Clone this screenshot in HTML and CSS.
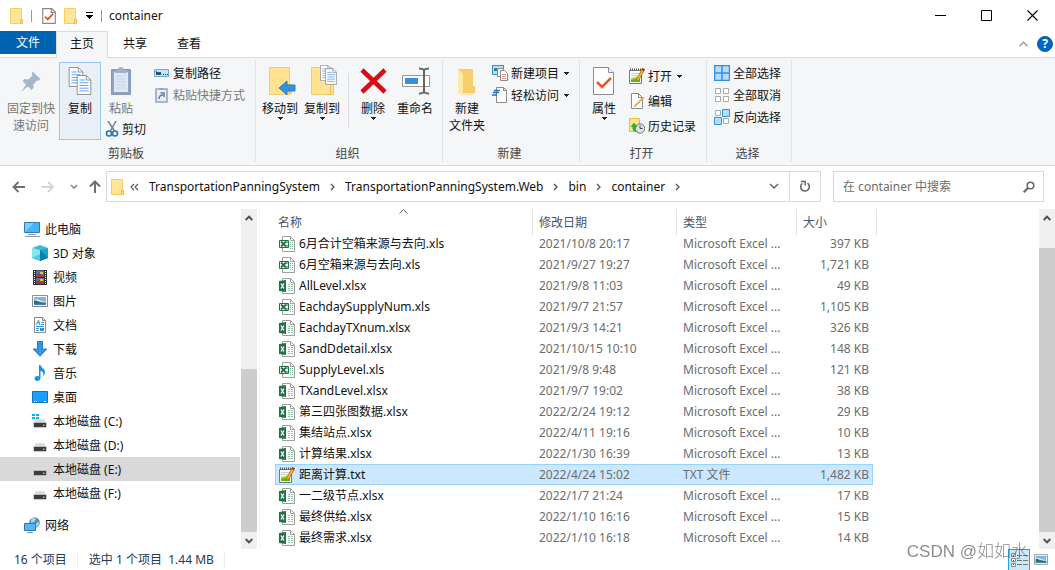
FILE: index.html
```
<!DOCTYPE html>
<html lang="zh-CN">
<head>
    <meta charset="UTF-8">
    <meta name="viewport" content="width=device-width, initial-scale=1.0">
    <title>container</title>
    <link rel="stylesheet" href="styles.css">
</head>
<body>
    <!-- Shared icons -->
    <svg class="symbols" aria-hidden="true">
        <symbol id="folder" viewBox="0 0 16 16">
            <path d="M1.5.5h11v11h1v4h-12z" fill="#ffe69a" stroke="#f3cf62"/>
            <path d="M11.5 11.5h2v4h-2z" fill="#ffe08a" stroke="#eebf4a"/>
        </symbol>
        <symbol id="caret" viewBox="0 0 5 3">
            <path d="M0 0h5v1H0zM1 1h3v1H1zM2 2h1v1H2z" fill="#222"/>
        </symbol>
        <symbol id="chevron" viewBox="0 0 5 8">
            <path d="M1 1l3 3-3 3" fill="none" stroke="#555" stroke-width="1.3"/>
        </symbol>
        <symbol id="up" viewBox="0 0 8 6">
            <path d="M.7 5L4 1.6 7.3 5" fill="none" stroke="#505050" stroke-width="2"/>
        </symbol>
        <symbol id="down" viewBox="0 0 8 6">
            <path d="M.7 1L4 4.4 7.3 1" fill="none" stroke="#505050" stroke-width="2"/>
        </symbol>
        <symbol id="xls" viewBox="0 0 16 16">
            <path d="M3.500.5h8l4 4v11h-12z" fill="#fff" stroke="#a0a0a0"/>
            <path d="M11.500.5v4h4" fill="none" stroke="#a0a0a0"/>
            <path d="M11 6.500h1m1 0h1M11 8.500h1m1 0h1M11 10.500h1m1 0h1M11 12.500h1m1 0h1" stroke="#6fb38d"/>
            <path d="M.5 4.500h9v7h-9z" fill="#fff" stroke="#217346"/>
            <path d="M2 5.500l5 5M7 5.500l-5 5" stroke="#217346" stroke-width="1.800"/>
            <path d="M7 6h2M7 10h2" stroke="#217346"/>
        </symbol>
        <symbol id="xlsx" viewBox="0 0 16 16">
            <path d="M3.500.5h8l4 4v11h-12z" fill="#fff" stroke="#a0a0a0"/>
            <path d="M11.500.5v4h4" fill="none" stroke="#a0a0a0"/>
            <path d="M9 6.500h2m1 0h2M9 8.500h2m1 0h2M9 10.500h2m1 0h2M9 12.500h2m1 0h2" stroke="#8cc4a4"/>
            <path d="M0 3l7-1v12l-7-1z" fill="#217346"/>
            <path d="M2 5.500l3 5M5 5.500l-3 5" stroke="#fff" stroke-width="1.300"/>
        </symbol>
        <symbol id="notepad" viewBox="0 0 16 16">
            <path d="M.5 2.500h12v13H.5z" fill="#fff" stroke="#777"/>
            <path d="M2 5.500h9M2 7.500h9" stroke="#ccc"/>
            <path d="M2 10l9-2v6H2z" fill="#a5d916"/>
            <path d="M2 12l9-2v4H2z" fill="#5fb80b"/>
            <path d="M1 1.500h12" stroke="#555" stroke-width="2" stroke-dasharray="1 1"/>
            <path d="M14 2L8.500 12" stroke="#8a5a10" stroke-width="3"/>
            <path d="M14 2L8.500 12" stroke="#f8b830" stroke-width="1.800"/>
            <path d="M14.700.5l-1 2" stroke="#b4231a" stroke-width="3"/>
        </symbol>
        <symbol id="picture" viewBox="0 0 16 12">
            <path d="M.5.5h15v11H.5z" fill="#fff" stroke="#8c8c8c"/>
            <path d="M2 2h12v8H2z" fill="#7eb6e8"/>
            <path d="M2 5.500c2-2 4-1 6 0s4 1 6 1V8H2z" fill="#e4f2fa"/>
            <path d="M2 5.500c3-.5 5 2 12 2V10H2z" fill="#2e6b63"/>
            <path d="M2 8.500h12V10H2z" fill="#3b85ba"/>
        </symbol>
        <symbol id="drive" viewBox="0 0 16 16">
            <path d="M4 6h8l2 4H2z" fill="#d9dbde"/>
            <path d="M1.500 9.500h13v5h-13z" fill="#9a9a9a"/>
            <path d="M2 10h12v4H2z" fill="#3c3c3c"/>
            <path d="M11 11.500h1.500V13H11z" fill="#67e36b"/>
        </symbol>
        <symbol id="page-check" viewBox="0 0 24 32">
            <path d="M1.500 2.500h15l5 5v22h-20z" fill="#fff" stroke="#8c8c8c"/>
            <path d="M16.500 2.500v5h5" fill="#f4f4f4" stroke="#8c8c8c"/>
            <path d="M5 17l5 5 9-9" fill="none" stroke="#f0561d" stroke-width="2.500"/>
        </symbol>
        <symbol id="sheet" viewBox="0 0 16 22">
            <path d="M.5.5h10l5 5v16H.5z" fill="#fff" stroke="#888"/>
            <path d="M10.500.5v5h5" fill="none" stroke="#888"/>
            <path d="M3 5.500h6M3 8.500h10M3 11.500h10M3 14.500h10M3 17.500h10" stroke="#4f9cec"/>
        </symbol>
    </svg>

    <header class="titlebar">
        <svg class="icon"><use href="#folder"/></svg>
        <span class="bar"></span>
        <button class="quick" aria-label="属性"><svg width="14" height="16" viewBox="0 0 24 28"><path d="M1 1h16l6 6v20H1z" fill="#fff" stroke="#888" stroke-width="2"/><path d="M16 1v7h7" fill="none" stroke="#888" stroke-width="2"/><path d="M5 15l5 5 9-10" fill="none" stroke="#e2501c" stroke-width="3"/></svg></button>
        <button class="quick" aria-label="新建文件夹"><svg class="icon"><use href="#folder"/></svg></button>
        <button class="quick" aria-label="自定义快速访问工具栏"><svg width="7" height="7" viewBox="0 0 7 7"><path d="M0 .5h7M0 3.500h7M1 4.500h5M2 5.500h3M3 6.500h1" stroke="#000"/></svg></button>
        <span class="bar"></span>
        <h1>container</h1>
        <div class="window-buttons">
            <button aria-label="最小化"><svg width="11" height="11"><path d="M0 5.500h11" stroke="#000"/></svg></button>
            <button aria-label="最大化"><svg width="11" height="11"><path d="M1 .5h9.500v10H.5V.5z" fill="none" stroke="#000"/></svg></button>
            <button aria-label="关闭"><svg width="11" height="11"><path d="M.5.5l10 10M10.500.5l-10 10" stroke="#000" stroke-width="1.100"/></svg></button>
        </div>
    </header>

    <nav class="tabs">
        <button class="tab file">文件</button>
        <button class="tab active">主页</button>
        <button class="tab">共享</button>
        <button class="tab">查看</button>
        <div class="tab-tools">
            <button aria-label="折叠功能区"><svg width="9" height="6" viewBox="0 0 9 6"><path d="M.5 5.200l4-4 4 4" fill="none" stroke="#9a9a9a" stroke-width="1.300"/></svg></button>
            <button class="help" aria-label="帮助">?</button>
        </div>
    </nav>

    <section class="ribbon">
        <div class="group clipboard">
            <div class="tools">
                <button class="big wide disabled">
                    <svg width="32" height="32"><g fill="#a9b6c9"><path d="M17.500 6.500l8 7.500-1.800 1.800-1.400-.6-4 4.200.4 3.400-2.200 2.200-9-9 2.200-2 3.600.4 4.200-4-.8-1.500z"/><path d="M12 18.500l2 2L6 27z"/></g></svg>
                    固定到快<br>速访问
                </button>
                <button class="big selected">
                    <svg width="32" height="32"><use href="#sheet" x="4" y="2" width="16" height="20"/><use href="#sheet" x="12" y="10" width="16" height="20"/></svg>
                    复制
                </button>
                <div class="column paste">
                    <button class="big disabled">
                        <svg width="32" height="32"><path d="M6.500 4.500h19v25h-19z" fill="#8fa3c0" stroke="#8698b5"/><path d="M9 7h14v20H9z" fill="#dfe7f3"/><path d="M10 8V5h3c0-4 6-4 6 0h3v3z" fill="#a3b1c8"/><path d="M11 11h10M11 14h10M11 17h10M11 20h10M11 23h10" stroke="#c6d3e6"/></svg>
                        粘贴
                    </button>
                    <button class="small">
                        <svg class="icon" viewBox="0 0 16 16"><path d="M3 0l6.500 10M11 0L5.500 10" stroke="#71808c" stroke-width="1.500"/><circle cx="4" cy="12.500" r="2.500" fill="none" stroke="#2878b8" stroke-width="1.600"/><circle cx="10" cy="12.500" r="2.500" fill="none" stroke="#2878b8" stroke-width="1.600"/></svg>
                        剪切
                    </button>
                </div>
                <div class="column paths">
                    <button class="small">
                        <svg class="icon" viewBox="0 0 16 16"><path d="M.5 4.500h14v7H.5z" fill="#c3e4fb" stroke="#6ba9d6"/><path d="M2 6l1 4 1-3 1 3 1-3 1 3M9 9.500h1m1 0h1m1 0h1" fill="none" stroke="#173c5c"/></svg>
                        复制路径
                    </button>
                    <button class="small disabled">
                        <svg class="icon" viewBox="0 0 16 16"><path d="M2 2h11v13H2z" fill="#e9eef6" stroke="#98a7be" stroke-width="1.600"/><path d="M5 3V1h5v2z" fill="#98a7be"/><path d="M5 12c0-3 1-4 4-4m-2.500-2H10v4" fill="none" stroke="#6b7f9c" stroke-width="1.600"/></svg>
                        粘贴快捷方式
                    </button>
                </div>
            </div>
            <div class="group-name">剪贴板</div>
        </div>

        <div class="group organize">
            <div class="tools">
                <button class="big">
                    <svg width="32" height="32"><path d="M5.500 2.500h20v27h-20z" fill="#ffe38f" stroke="#f0cf6b"/><path d="M24 19h4v10h-4z" fill="#f3ce68"/><path d="M15 23l8-7v4h8v6h-8v4z" fill="#3491e2" stroke="#2a7cc9"/></svg>
                    移动到
                    <svg class="caret"><use href="#caret"/></svg>
                </button>
                <button class="big">
                    <svg width="32" height="32"><path d="M5.500 2.500h20v27h-20z" fill="#ffe38f" stroke="#f0cf6b"/><path d="M24.500 19.500h3v10h-3z" fill="#fae08f" stroke="#eec65d"/><use href="#sheet" x="14" y="0" width="12" height="16"/><use href="#sheet" x="19" y="3" width="12" height="17"/></svg>
                    复制到
                    <svg class="caret"><use href="#caret"/></svg>
                </button>
                <span class="divider"></span>
                <button class="big">
                    <svg width="32" height="32"><path d="M5 5l23 22M28 5L5 27" stroke="#d90b14" stroke-width="4.500"/></svg>
                    删除
                    <svg class="caret"><use href="#caret"/></svg>
                </button>
                <button class="big">
                    <svg width="32" height="32"><path d="M3.500 10.500h27v11h-27z" fill="#fff" stroke="#999"/><path d="M6 13h13v6H6z" fill="#3491e2"/><path d="M20 3.500c3 0 4.500.5 5 2 .5-1.500 2-2 5-2M25 4v24M20 28.500c3 0 4.500-.5 5-2 .5 1.500 2 2 5 2" fill="none" stroke="#666" stroke-width="2"/></svg>
                    重命名
                </button>
            </div>
            <div class="group-name">组织</div>
        </div>

        <div class="group create">
            <div class="tools">
                <button class="big">
                    <svg width="32" height="32"><path d="M7 4h15v17h2v7H7z" fill="#f6cf6c"/><path d="M7 4l5 5v22l-5-4z" fill="#ffe9a8"/><path d="M12 28h13l-4 2h-9z" fill="#fbe8b4"/></svg>
                    新建<br>文件夹
                </button>
                <div class="column">
                    <button class="small">
                        <svg class="icon" viewBox="0 0 16 16"><path d="M.5.5h11v9H.5z" fill="#b9e0f4" stroke="#4689b0"/><path d="M2 3h3v3H2z" fill="#2c7db0"/><path d="M5.500 3.500h6v8h-6z" fill="#fff" stroke="#8a8a8a"/><path d="M8.500 5.500h4l3 3v7h-7z" fill="#fff" stroke="#8a8a8a"/><path d="M10 9.500h4M10 11.500h4M10 13.500h4" stroke="#d99"/></svg>
                        新建项目
                        <svg class="caret"><use href="#caret"/></svg>
                    </button>
                    <button class="small">
                        <svg class="icon" viewBox="0 0 16 16"><path d="M4.500.5h7l3 3v12h-10z" fill="#fff" stroke="#8a8a8a"/><path d="M11.500.5v3h3" fill="none" stroke="#8a8a8a"/><path d="M2 3.500h6M1 5.500h6M0 8h5" stroke="#2472b3" stroke-width="1.300"/></svg>
                        轻松访问
                        <svg class="caret"><use href="#caret"/></svg>
                    </button>
                </div>
            </div>
            <div class="group-name">新建</div>
        </div>

        <div class="group open">
            <div class="tools">
                <button class="big">
                    <svg width="24" height="32"><use href="#page-check"/></svg>
                    属性
                    <svg class="caret"><use href="#caret"/></svg>
                </button>
                <div class="column roomy">
                    <button class="small">
                        <svg class="icon"><use href="#notepad"/></svg>
                        打开
                        <svg class="caret"><use href="#caret"/></svg>
                    </button>
                    <button class="small">
                        <svg class="icon" viewBox="0 0 16 16"><path d="M2.500.5h7l4 4v11h-11z" fill="#fff" stroke="#8a8a8a"/><path d="M9.500.5v4h4" fill="none" stroke="#8a8a8a"/><path d="M15 5l-8 8-2 1 1-2 8-8z" fill="#f6bb42" stroke="#d8972a" stroke-width=".6"/></svg>
                        编辑
                    </button>
                    <button class="small">
                        <svg class="icon" viewBox="0 0 16 16"><path d="M.5.5h10v13H.5z" fill="#ffe38f" stroke="#e8bf4c"/><circle cx="11" cy="10.500" r="4.700" fill="#dfe3e6" stroke="#6f777d"/><path d="M11 7.500v3h2.500" fill="none" stroke="#444"/><path d="M9 14c-4 0-6-2-5.500-5H1.500L5 4.500 8.500 9H6.500c0 2 .5 4 2.500 5z" fill="#2fae3c"/></svg>
                        历史记录
                    </button>
                </div>
            </div>
            <div class="group-name">打开</div>
        </div>

        <div class="group select">
            <div class="tools">
                <div class="column">
                    <button class="small">
                        <svg class="icon" viewBox="0 0 16 16"><path d="M.5.5h15v15H.5zM8 0v16M0 8h16" fill="#b5dcfa" stroke="#2f93e4" stroke-width="1.500"/></svg>
                        全部选择
                    </button>
                    <button class="small">
                        <svg class="icon" viewBox="0 0 16 16"><path d="M1.500 1.500h5v5h-5zM9.500 1.500h5v5h-5zM1.500 9.500h5v5h-5zM9.500 9.500h5v5h-5z" fill="#fff" stroke="#aaa"/></svg>
                        全部取消
                    </button>
                    <button class="small">
                        <svg class="icon" viewBox="0 0 16 16"><path d="M1.500 1.500h5v5h-5zM9.500 9.500h5v5h-5z" fill="#fff" stroke="#aaa"/><path d="M8.500.5h7v7h-7zM.5 8.500h7v7h-7z" fill="#b5dcfa" stroke="#2f93e4"/></svg>
                        反向选择
                    </button>
                </div>
            </div>
            <div class="group-name">选择</div>
        </div>
    </section>

    <section class="navigation">
        <div class="history">
            <button aria-label="后退"><svg width="14" height="12"><path d="M6.500 1l-5 5 5 5M1.500 6H13" fill="none" stroke="#6e6e6e" stroke-width="1.800"/></svg></button>
            <button aria-label="前进"><svg width="14" height="12"><path d="M7 1l5 5-5 5M12 6H.5" fill="none" stroke="#d4d4d4" stroke-width="1.800"/></svg></button>
            <button aria-label="最近浏览的位置"><svg width="8" height="6" viewBox="0 0 8 6"><path d="M1 1l3 3 3-3" fill="none" stroke="#888" stroke-width="1.600"/></svg></button>
            <button aria-label="上移"><svg width="14" height="13"><path d="M2 6.500l5-5 5 5M7 1.500V13" fill="none" stroke="#6e6e6e" stroke-width="2"/></svg></button>
        </div>
        <div class="address">
            <svg class="icon"><use href="#folder"/></svg>
            <svg width="9" height="8" viewBox="0 0 9 8"><path d="M4 1L1 4l3 3M8 1L5 4l3 3" fill="none" stroke="#555" stroke-width="1.100"/></svg>
            <a href="#">TransportationPanningSystem</a>
            <svg width="5" height="8"><use href="#chevron"/></svg>
            <a href="#">TransportationPanningSystem.Web</a>
            <svg width="5" height="8"><use href="#chevron"/></svg>
            <a href="#">bin</a>
            <svg width="5" height="8"><use href="#chevron"/></svg>
            <a href="#">container</a>
            <svg width="5" height="8"><use href="#chevron"/></svg>
            <button class="history-list" aria-label="以前的位置"><svg width="10" height="7"><path d="M1 1l4 4 4-4" fill="none" stroke="#666" stroke-width="1.500"/></svg></button>
            <button class="refresh" aria-label="刷新"><svg width="12" height="13" viewBox="0 0 12 13"><path d="M8.500 3.200a4.300 4.300 0 1 1-5.200.2" fill="none" stroke="#666" stroke-width="1.600"/><path d="M2 1.500h4.200v4" fill="none" stroke="#666" stroke-width="1.500"/></svg></button>
        </div>
        <form class="search">
            <input type="text" aria-label="搜索" placeholder="在 container 中搜索">
            <button type="button" aria-label="开始搜索"><svg width="12" height="12"><circle cx="7.500" cy="4.500" r="3.300" fill="none" stroke="#666" stroke-width="1.500"/><path d="M5 7l-4.300 4.300" stroke="#666" stroke-width="2"/></svg></button>
        </form>
    </section>

    <main>
        <nav class="sidebar">
            <a class="root" href="#"><svg class="icon" viewBox="0 0 16 16"><path d="M.5 1.500h15v10H.5z" fill="#41b4fc" stroke="#3579a8"/><path d="M1 11V2h9z" fill="#7accff"/><path d="M4 13.500h8M1 15.500h15" stroke="#8a9cab"/></svg>此电脑</a>
            <a href="#"><svg class="icon" viewBox="0 0 16 16"><path d="M0 3l8-3 8 3-8 3z" fill="#43bccb"/><path d="M0 3l8 2v11l-8-3z" fill="#8ce3e8"/><path d="M16 3L8 5v11l8-3z" fill="#12a5ce"/><path d="M8 5l8 8-8 3z" fill="#087fae"/><path d="M0 13l8-4v7z" fill="#4dccd9"/></svg>3D 对象</a>
            <a href="#"><svg class="icon" viewBox="0 0 16 16"><path d="M1 1h14v15H1z" fill="#303030"/><path d="M4 1.500h8v6H4zM4 9h8v6H4z" fill="#4775ca"/><path d="M4 6l3-2 5 3v1H4zM4 13l3-2 5 2v2H4z" fill="#a33b2b"/><path d="M8 3h3v2H8zM8 10h3v2H8z" fill="#ecbd3d"/><path d="M2.500 2v14M13.500 2v14" stroke="#fff" stroke-dasharray="1 1"/></svg>视频</a>
            <a href="#"><svg width="16" height="12"><use href="#picture"/></svg>图片</a>
            <a href="#"><svg class="icon" viewBox="0 0 16 16"><path d="M2.500.5h8l3 3v12h-11z" fill="#fff" stroke="#8a8a8a"/><path d="M10.500.5v3h3" fill="none" stroke="#8a8a8a"/><path d="M4 8l2.500-5L8 8M5 6h3M9 5.500h3M9 7.500h3M4 9.500h8M4 11.500h3M4 13.500h3" fill="none" stroke="#3299dd"/><path d="M8 11h4v3H8z" fill="#438fae"/></svg>文档</a>
            <a href="#"><svg class="icon" viewBox="0 0 16 16"><path d="M5.500.5h5V8h4.300L8 15.300 1.200 8h4.300z" fill="#3a94e4" stroke="#2b7ac2"/></svg>下载</a>
            <a href="#"><svg class="icon" viewBox="0 0 16 16"><path d="M7 0h1.500c.5 3 4.500 3.500 4.500 7 0 2-1 3.500-2 4 1-3 0-4.500-2.500-5V13c0 3.500-6 4-6 .5 0-2 2.500-3 4.500-2z" fill="#1c93e3"/></svg>音乐</a>
            <a href="#"><svg class="icon" viewBox="0 0 16 16"><path d="M.5 2.500h15v11H.5z" fill="#1aa0ff" stroke="#1671b4"/><path d="M2 12.500h1m1 0h1m7 0h2" stroke="#fff"/></svg>桌面</a>
            <a href="#"><svg class="icon" viewBox="0 0 16 16"><use href="#drive"/><path d="M0 1h3v2H0zM4 1h3v2H4zM0 4h3v2H0zM4 4h3v2H4z" fill="#0bb2f2"/></svg>本地磁盘 (C:)</a>
            <a href="#"><svg class="icon"><use href="#drive"/></svg>本地磁盘 (D:)</a>
            <a class="current" href="#"><svg class="icon"><use href="#drive"/></svg>本地磁盘 (E:)</a>
            <a href="#"><svg class="icon"><use href="#drive"/></svg>本地磁盘 (F:)</a>
            <a class="root network" href="#"><svg class="icon" viewBox="0 0 16 16"><circle cx="10.500" cy="5.500" r="5.300" fill="#4f93b8"/><path d="M7 2c2-2 4-1 5 0l-2 3-3 1zM12 6l3-1c0 3-1 4-3 5z" fill="#a9d4e5"/><path d="M.5 6.500h11v7H.5z" fill="#51b9fa" stroke="#2e74a8"/><path d="M3 15.500h6" stroke="#6d98b5"/></svg>网络</a>
        </nav>
        <div class="scrollbar">
            <button aria-label="向上滚动"><svg width="8" height="6"><use href="#up"/></svg></button>
            <div class="track side-track"><div class="thumb"></div></div>
            <button aria-label="向下滚动"><svg width="8" height="6"><use href="#down"/></svg></button>
        </div>

        <section class="files">
            <table>
                <colgroup>
                    <col>
                    <col class="col-date">
                    <col class="col-type">
                    <col class="col-size">
                </colgroup>
                <thead>
                    <tr>
                        <th>名称<svg class="sort" width="9" height="5" viewBox="0 0 9 5"><path d="M.5 4.500l4-4 4 4" fill="none" stroke="#666"/></svg></th>
                        <th>修改日期</th>
                        <th>类型</th>
                        <th>大小</th>
                    </tr>
                </thead>
                <tbody>
                    <tr><td><svg class="icon"><use href="#xls"/></svg>6月合计空箱来源与去向.xls</td><td>2021/10/8 20:17</td><td>Microsoft Excel ...</td><td>397 KB</td></tr>
                    <tr><td><svg class="icon"><use href="#xls"/></svg>6月空箱来源与去向.xls</td><td>2021/9/27 19:27</td><td>Microsoft Excel ...</td><td>1,721 KB</td></tr>
                    <tr><td><svg class="icon"><use href="#xlsx"/></svg>AllLevel.xlsx</td><td>2021/9/8 11:03</td><td>Microsoft Excel ...</td><td>49 KB</td></tr>
                    <tr><td><svg class="icon"><use href="#xls"/></svg>EachdaySupplyNum.xls</td><td>2021/9/7 21:57</td><td>Microsoft Excel ...</td><td>1,105 KB</td></tr>
                    <tr><td><svg class="icon"><use href="#xlsx"/></svg>EachdayTXnum.xlsx</td><td>2021/9/3 14:21</td><td>Microsoft Excel ...</td><td>326 KB</td></tr>
                    <tr><td><svg class="icon"><use href="#xlsx"/></svg>SandDdetail.xlsx</td><td>2021/10/15 10:10</td><td>Microsoft Excel ...</td><td>148 KB</td></tr>
                    <tr><td><svg class="icon"><use href="#xls"/></svg>SupplyLevel.xls</td><td>2021/9/8 9:48</td><td>Microsoft Excel ...</td><td>121 KB</td></tr>
                    <tr><td><svg class="icon"><use href="#xlsx"/></svg>TXandLevel.xlsx</td><td>2021/9/7 19:02</td><td>Microsoft Excel ...</td><td>38 KB</td></tr>
                    <tr><td><svg class="icon"><use href="#xlsx"/></svg>第三四张图数据.xlsx</td><td>2022/2/24 19:12</td><td>Microsoft Excel ...</td><td>29 KB</td></tr>
                    <tr><td><svg class="icon"><use href="#xlsx"/></svg>集结站点.xlsx</td><td>2022/4/11 19:16</td><td>Microsoft Excel ...</td><td>10 KB</td></tr>
                    <tr><td><svg class="icon"><use href="#xlsx"/></svg>计算结果.xlsx</td><td>2022/1/30 16:39</td><td>Microsoft Excel ...</td><td>13 KB</td></tr>
                    <tr class="selected"><td><svg class="icon"><use href="#notepad"/></svg>距离计算.txt</td><td>2022/4/24 15:02</td><td>TXT 文件</td><td>1,482 KB</td></tr>
                    <tr><td><svg class="icon"><use href="#xlsx"/></svg>一二级节点.xlsx</td><td>2022/1/7 21:24</td><td>Microsoft Excel ...</td><td>17 KB</td></tr>
                    <tr><td><svg class="icon"><use href="#xlsx"/></svg>最终供给.xlsx</td><td>2022/1/10 16:16</td><td>Microsoft Excel ...</td><td>15 KB</td></tr>
                    <tr><td><svg class="icon"><use href="#xlsx"/></svg>最终需求.xlsx</td><td>2022/1/10 16:18</td><td>Microsoft Excel ...</td><td>14 KB</td></tr>
                </tbody>
            </table>
        </section>
        <div class="scrollbar">
            <button aria-label="向上滚动"><svg width="8" height="6"><use href="#up"/></svg></button>
            <div class="track file-track"><div class="thumb"></div></div>
            <button aria-label="向下滚动"><svg width="8" height="6"><use href="#down"/></svg></button>
        </div>
    </main>

    <footer class="status">
        <span>16 个项目</span>
        <span>选中 1 个项目&nbsp; 1.44 MB</span>
        <div class="views">
            <button class="on" aria-label="详细信息"><svg width="17" height="16"><path d="M.5 1.500h4v3h-4zM.5 6.500h4v3h-4zM.5 11.500h4v3h-4z" fill="#fff" stroke="#888"/><path d="M6 3.500h5m1 0h5M6 8.500h5m1 0h5M6 12.500h5m1 0h5" stroke="#777"/><path d="M2 3h1v1H2zM2 8h1v1H2z" fill="#2472c8"/><path d="M2 12h1v1H2z" fill="#d22"/></svg></button>
            <button aria-label="大缩略图"><svg width="14" height="11"><use href="#picture"/></svg></button>
        </div>
    </footer>
    <div class="watermark">CSDN @如如水</div>
</body>
</html>
```
FILE: styles.css
```
/* Global Styles */
* {
    box-sizing: border-box;
}

body {
    display: flex;
    flex-direction: column;
    height: 100vh;
    margin: 0;
    overflow: hidden;
    background: #fff;
    color: #111;
    font-family: "Noto Sans", "Noto Sans CJK SC", sans-serif;
    font-size: 12px;
    line-height: 17px;
}

button,
input {
    margin: 0;
    padding: 0;
    border: none;
    background: none;
    color: inherit;
    font: inherit;
}

a {
    color: inherit;
    text-decoration: none;
}

svg {
    flex: none;
}

.symbols {
    position: absolute;
    width: 0;
    height: 0;
}

.icon {
    width: 16px;
    height: 16px;
}

.caret {
    width: 5px;
    height: 3px;
}

/* Title bar */
.titlebar {
    display: flex;
    flex: none;
    align-items: center;
    height: 31px;
    padding-left: 9px;
}

.titlebar h1 {
    margin: 0 0 0 7px;
    font-size: 12px;
    font-weight: normal;
}

.bar {
    width: 1px;
    height: 12px;
    margin-left: 6px;
    background: #999;
}

.quick {
    display: flex;
    margin-left: 10px;
}

.quick + .quick {
    margin-left: 7px;
}

.titlebar .quick + .bar {
    margin-left: 8px;
}

.window-buttons {
    display: flex;
    margin-left: auto;
}

.window-buttons button {
    display: flex;
    align-items: center;
    justify-content: center;
    width: 46px;
    height: 30px;
}

/* Tabs */
.tabs {
    display: flex;
    flex: none;
    height: 27px;
    border-bottom: 1px solid #dadbdc;
}

.tab {
    width: 54px;
    height: 24px;
}

.tab.file {
    width: 56px;
    height: 23px;
    background: #0063b1;
    color: #fff;
}

.tab.active {
    width: 52px;
    height: 27px;
    padding-bottom: 3px;
    border: 1px solid #dadbdc;
    border-bottom: none;
    background: #f5f6f7;
}

.tab-tools {
    display: flex;
    align-items: center;
    gap: 9px;
    margin-left: auto;
    padding-right: 2px;
}

.tab-tools button {
    display: flex;
}

.tab-tools .help {
    justify-content: center;
    width: 16px;
    height: 16px;
    border: 1px solid #155a9c;
    border-radius: 50%;
    background: #0067c5;
    color: #fff;
    font-weight: bold;
    line-height: 14px;
}

/* Ribbon */
.ribbon {
    display: flex;
    flex: none;
    height: 108px;
    padding: 2px 0 3px;
    border-bottom: 1px solid #dadbdc;
    background: #f5f6f7;
}

.group {
    display: flex;
    flex-direction: column;
    justify-content: space-between;
    padding: 2px 0 0 3px;
    border-right: 1px solid #e2e3e4;
}

.clipboard {
    width: 256px;
}

.organize {
    width: 187px;
}

.create {
    width: 137px;
}

.open {
    width: 127px;
}

.select {
    width: 85px;
}

.tools {
    display: flex;
}

.group-name {
    padding-right: 6px;
    color: #444;
    text-align: center;
}

.column {
    display: flex;
    flex-direction: column;
    align-items: flex-start;
}

.column.paste {
    justify-content: space-between;
    width: 47px;
    padding-left: 1px;
}

.column.paths {
    padding-left: 2px;
}

.roomy {
    gap: 3px;
    padding-top: 3px;
}

.big {
    display: flex;
    flex-direction: column;
    align-items: center;
    width: 42px;
    height: 78px;
    padding-top: 2px;
    border: 1px solid transparent;
}

.big > svg:first-child {
    margin-bottom: 3px;
}

.big.wide {
    width: 56px;
}

.big.selected {
    border-color: #99c9ef;
    background: #e8eff7;
}

.paste .big {
    width: 38px;
    height: 56px;
}

.disabled {
    color: #777;
}

.small {
    display: flex;
    align-items: center;
    gap: 3px;
    height: 22px;
    padding-left: 4px;
}

.paste .small {
    margin-left: 3px;
    padding-left: 0;
    gap: 1px;
}

.small .caret {
    margin-left: 2px;
}

.divider {
    width: 1px;
    height: 55px;
    margin: 11px 3px 0 5px;
    background: #dadbdc;
}

/* Address and search */
.navigation {
    display: flex;
    flex: none;
    padding: 5px 11px 7px 12px;
}

.history {
    display: flex;
    align-items: center;
    width: 94px;
    gap: 15px;
}

.history button {
    display: flex;
}

.history button:last-child {
    margin-left: -5px;
}

.address {
    display: flex;
    flex: 1;
    align-items: center;
    gap: 10px;
    height: 31px;
    padding-left: 3px;
    border: 1px solid #d9d9d9;
}

.address .icon {
    margin-right: -6px;
}

.address button {
    display: flex;
    align-items: center;
    justify-content: center;
    width: 31px;
    height: 29px;
}

.address .history-list {
    margin-left: auto;
    margin-right: -10px;
}

.address .refresh {
    border-left: 1px solid #d9d9d9;
}

.search {
    display: flex;
    align-items: center;
    width: 211px;
    height: 31px;
    margin-left: 12px;
    padding: 0 8px 0 9px;
    border: 1px solid #d9d9d9;
}

.search input {
    flex: 1;
    min-width: 0;
    outline: none;
}

.search input::placeholder {
    color: #6d6d6d;
    opacity: 1;
}

.search button {
    display: flex;
}

/* Main Section */
main {
    display: flex;
    flex: 1;
    min-height: 0;
}

.sidebar {
    width: 241px;
    padding-top: 8px;
    overflow: hidden;
}

.sidebar a {
    display: flex;
    align-items: center;
    gap: 5px;
    height: 24px;
    margin-right: 1px;
    padding-left: 32px;
}

.sidebar .root {
    padding-left: 24px;
}

.sidebar .network {
    margin-top: 8px;
}

.sidebar .current {
    background: #d9d9d9;
}

.scrollbar {
    display: flex;
    flex: none;
    flex-direction: column;
    width: 16px;
    background: #f0f0f0;
}

.scrollbar button {
    display: flex;
    align-items: center;
    justify-content: center;
    height: 17px;
}

.track {
    display: flex;
    flex: 1;
    flex-direction: column;
}

.thumb {
    flex: 1;
    background: #cdcdcd;
}

.side-track {
    padding-top: 143px;
}

.file-track {
    padding-top: 22px;
}

/* File list */
.files {
    flex: 1;
    min-width: 0;
    margin-left: 2px;
    padding-left: 15px;
    border-left: 1px solid #f3f3f3;
    overflow: hidden;
}

.files table {
    width: 598px;
    border-collapse: collapse;
    table-layout: fixed;
}

.col-date {
    width: 144px;
}

.col-type {
    width: 120px;
}

.col-size {
    width: 76px;
}

th {
    position: relative;
    height: 24px;
    padding: 3px 0 0 6px;
    color: #44546f;
    font-weight: normal;
    text-align: left;
}

th:first-child {
    padding-left: 3px;
}

/* column separators reach down past the header */
th::after {
    content: "";
    position: absolute;
    top: 0;
    right: 0;
    width: 1px;
    height: 27px;
    background: #e5e5e5;
}

th:last-child::after {
    right: -4px;
}

.sort {
    position: absolute;
    top: 0;
    left: 48%;
}

td {
    height: 21px;
    padding: 0 0 0 6px;
    color: #6d6d6d;
    white-space: nowrap;
}

td:first-child {
    padding-left: 4px;
    color: #111;
}

td:last-child {
    padding-right: 4px;
    text-align: right;
}

td .icon {
    margin-right: 4px;
    vertical-align: middle;
}

tr.selected {
    background: #cce8ff;
    outline: 1px solid #99d1ff;
    outline-offset: -1px;
}

/* Status bar */
.status {
    display: flex;
    flex: none;
    align-items: center;
    height: 21px;
    padding-left: 14px;
    color: #1e395b;
}

.status span {
    margin-right: 11px;
    padding-right: 10px;
    border-right: 1px solid #eee;
}

.views {
    display: flex;
    margin-left: auto;
    padding-right: 3px;
}

.views button {
    display: flex;
    align-items: center;
    justify-content: center;
    width: 22px;
    height: 22px;
}

.views .on {
    border: 1px solid #26a0da;
    background: #cbe8f6;
}

.watermark {
    position: fixed;
    right: 27px;
    bottom: 6px;
    color: rgba(90, 90, 90, 0.7);
    font-family: "Liberation Sans", "Noto Sans CJK SC", sans-serif;
    font-size: 17px;
    font-weight: 300;
    line-height: 24px;
}
```
